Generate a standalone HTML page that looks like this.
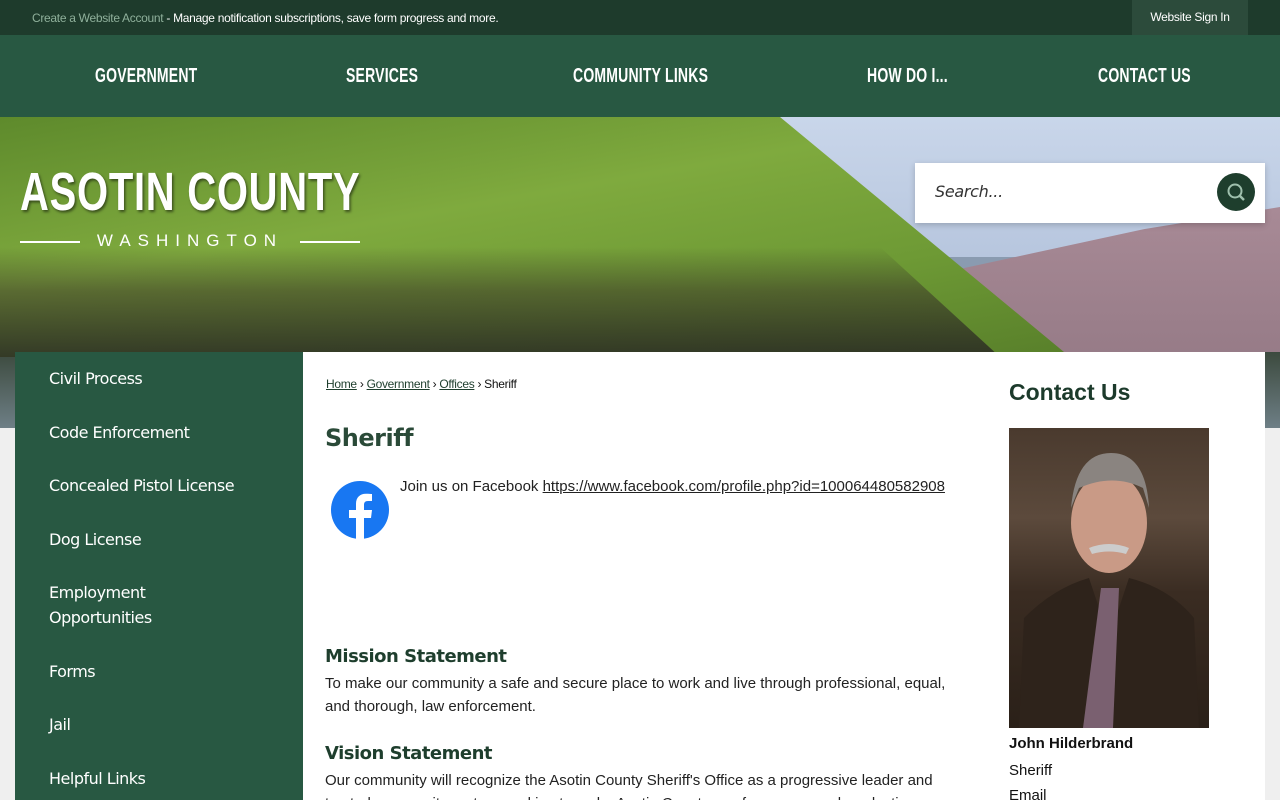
<!DOCTYPE html>
<html style="overflow:hidden"><head><meta charset="utf-8"><style>
*{margin:0;padding:0;box-sizing:border-box}
html,body{width:1280px;height:800px;overflow:hidden}
body{background:#efefef;font-family:"Liberation Sans",sans-serif;position:relative}
.top{position:absolute;top:0;left:0;width:1280px;height:35px;background:#1e3b2c;font-size:12px;color:#fff}
.top .t{position:absolute;left:32px;top:11px;letter-spacing:-0.3px}
.top .t span{color:#8fb09b}
.top .sign{position:absolute;left:1132px;top:0;width:116px;height:35px;background:#2c4b3b;text-align:center;line-height:35px;letter-spacing:-0.3px}
.nav{position:absolute;top:35px;left:0;width:1280px;height:82px;background:#285842}
.nav div{position:absolute;top:30px;color:#fff;font-family:"Liberation Sans Narrow","Liberation Sans",sans-serif;font-weight:bold;font-size:20px;transform:scaleX(.7);transform-origin:left;letter-spacing:.3px;white-space:nowrap}
.hero{position:absolute;top:117px;left:0;width:1280px;height:311px;background:#8a9bb0;overflow:hidden}
.sky{position:absolute;left:700px;top:0;width:580px;height:140px;background:linear-gradient(180deg,#c9d6ea,#b7c6de)}
.mtn{position:absolute;left:940px;top:90px;width:340px;height:221px;background:linear-gradient(180deg,#a88a96,#8e7480);clip-path:polygon(0 30%,60% 10%,100% 0,100% 100%,0 100%)}
.hill{position:absolute;left:0;top:0;width:1070px;height:240px;background:linear-gradient(170deg,#5e8a2c,#7faa3e 40%,#6e9a35 70%,#587f2a);clip-path:polygon(0 0,780px 0,1070px 240px,0 240px)}
.band{position:absolute;left:0;top:130px;width:1000px;height:110px;background:linear-gradient(180deg,rgba(60,70,30,.0),rgba(60,55,40,.55) 40%,rgba(40,40,35,.85));clip-path:polygon(0 0,880px 0,1000px 110px,0 110px)}
.river{position:absolute;left:0;top:235px;width:1280px;height:76px;background:linear-gradient(180deg,#3c4a3e,#6e7f86)}
.logo{position:absolute;left:20px;top:44px;color:#fff;font-weight:bold;font-size:54px;transform:scaleX(.74);transform-origin:left;font-family:"Liberation Sans Narrow","Liberation Sans",sans-serif;letter-spacing:1px;text-shadow:2px 2px 3px rgba(0,0,0,.5);white-space:nowrap}
.wa{position:absolute;left:20px;top:114px;width:340px;color:#fff;font-size:17px;letter-spacing:7px;text-align:center}
.wa:before,.wa:after{content:"";position:absolute;top:10px;width:60px;height:2px;background:#fff}
.wa:before{left:0}.wa:after{right:0}
.search{position:absolute;left:915px;top:163px;width:350px;height:60px;background:#fff;box-shadow:0 2px 6px rgba(0,0,0,.2)}
.search span{position:absolute;left:20px;top:19px;font-style:italic;color:#333;font-family:"DejaVu Sans",sans-serif;font-size:16px;letter-spacing:-.3px}
.search .b{position:absolute;left:302px;top:10px;width:38px;height:38px;border-radius:50%;background:#1e3e2d}
.side{position:absolute;left:15px;top:352px;width:288px;height:448px;background:#285842}
.side div{position:absolute;left:34px;color:#fff;font-size:16px;font-family:"DejaVu Sans",sans-serif;letter-spacing:-.5px;line-height:25px}
.main{position:absolute;left:303px;top:352px;width:962px;height:448px;background:#fff}
.bc{position:absolute;left:23px;top:25px;font-size:12px;color:#111;letter-spacing:-.3px}
.bc a{color:#1e3e2d;text-decoration:underline}
h1{position:absolute;left:22px;top:72px;font-family:"DejaVu Sans",sans-serif;font-size:24px;color:#2a4a38;letter-spacing:-.5px}
.fb{position:absolute;left:97px;top:126px;font-size:15px;color:#222}
.fb a{color:#222;text-decoration:underline}
h2{position:absolute;left:22px;font-family:"DejaVu Sans",sans-serif;font-size:18px;color:#1e3e2d;letter-spacing:-.5px}
.p{position:absolute;left:22px;width:640px;font-size:15px;color:#222;line-height:23px}
.ct{position:absolute;left:706px;top:27px;font-size:23px;font-weight:bold;color:#1c3a2b}
.photo{position:absolute;left:706px;top:76px;width:200px;height:300px;background:linear-gradient(180deg,#4a3a2e 0%,#5c4a3c 30%,#3a2c22 55%,#2a2018 100%)}
.r{position:absolute;left:706px;font-size:15px;color:#111}
</style></head><body>
<div class="top"><div class="t"><span>Create a Website Account</span> - Manage notification subscriptions, save form progress and more.</div><div class="sign">Website Sign In</div></div>
<div class="nav"><div style="left:95px">GOVERNMENT</div><div style="left:346px">SERVICES</div><div style="left:573px">COMMUNITY LINKS</div><div style="left:867px">HOW DO I...</div><div style="left:1098px">CONTACT US</div></div>
<div class="hero"><div class="sky"></div><div class="mtn"></div><div class="river"></div><div class="hill"></div><div class="band"></div>
<div class="logo">ASOTIN COUNTY</div><div class="wa">WASHINGTON</div></div>
<div class="search"><span>Search...</span><div class="b"><svg width="38" height="38" viewBox="0 0 38 38"><circle cx="18" cy="18" r="6.5" fill="none" stroke="#9fc0ad" stroke-width="2"/><line x1="23" y1="23" x2="27" y2="27" stroke="#9fc0ad" stroke-width="2.5"/></svg></div></div>
<div class="side">
<div style="top:14px">Civil Process</div><div style="top:68px">Code Enforcement</div><div style="top:121px">Concealed Pistol License</div><div style="top:175px">Dog License</div><div style="top:228px">Employment<br>Opportunities</div><div style="top:307px">Forms</div><div style="top:360px">Jail</div><div style="top:414px">Helpful Links</div>
</div>
<div class="main">
<div class="bc"><a>Home</a> › <a>Government</a> › <a>Offices</a> › Sheriff</div>
<h1>Sheriff</h1>
<svg style="position:absolute;left:28px;top:128px" width="58" height="60" viewBox="0 0 58 60"><circle cx="29" cy="30" r="29" fill="#1877f2"/><path d="M33 60V38h7l1-8h-8v-5c0-2.5 1-4 4-4h4v-7c-1 0-3-.3-6-.3-6 0-10 3.5-10 10v6.3h-7v8h7v22z" fill="#fff"/></svg>
<div class="fb">Join us on Facebook <a>https://www.facebook.com/profile.php?id=100064480582908</a></div>
<h2 style="top:294px">Mission Statement</h2>
<div class="p" style="top:320px">To make our community a safe and secure place to work and live through professional, equal, and thorough, law enforcement.</div>
<h2 style="top:391px">Vision Statement</h2>
<div class="p" style="top:417px">Our community will recognize the Asotin County Sheriff's Office as a progressive leader and trusted community partner working to make Asotin County a safe, secure, and productive</div>
<div class="ct">Contact Us</div>
<div class="photo"><svg width="200" height="300" viewBox="0 0 200 300"><ellipse cx="100" cy="95" rx="38" ry="50" fill="#c99a86"/><path d="M62 80q5-55 40-55t38 55l-6-20q-30-15-64 0z" fill="#8a8480"/><path d="M80 120q20-8 40 0l-3 6q-17-5-34 0z" fill="#ccc"/><path d="M10 300l5-110q30-30 65-40l20 60 20-60q40 10 65 40l5 110z" fill="#2e231b"/><path d="M92 160l-18 140h30l6-140z" fill="#7a6070"/></svg></div>
<div class="r" style="top:383px;font-weight:bold">John Hilderbrand</div>
<div class="r" style="top:410px">Sheriff</div>
<div class="r" style="top:435px">Email</div>
</div>
</body></html>
